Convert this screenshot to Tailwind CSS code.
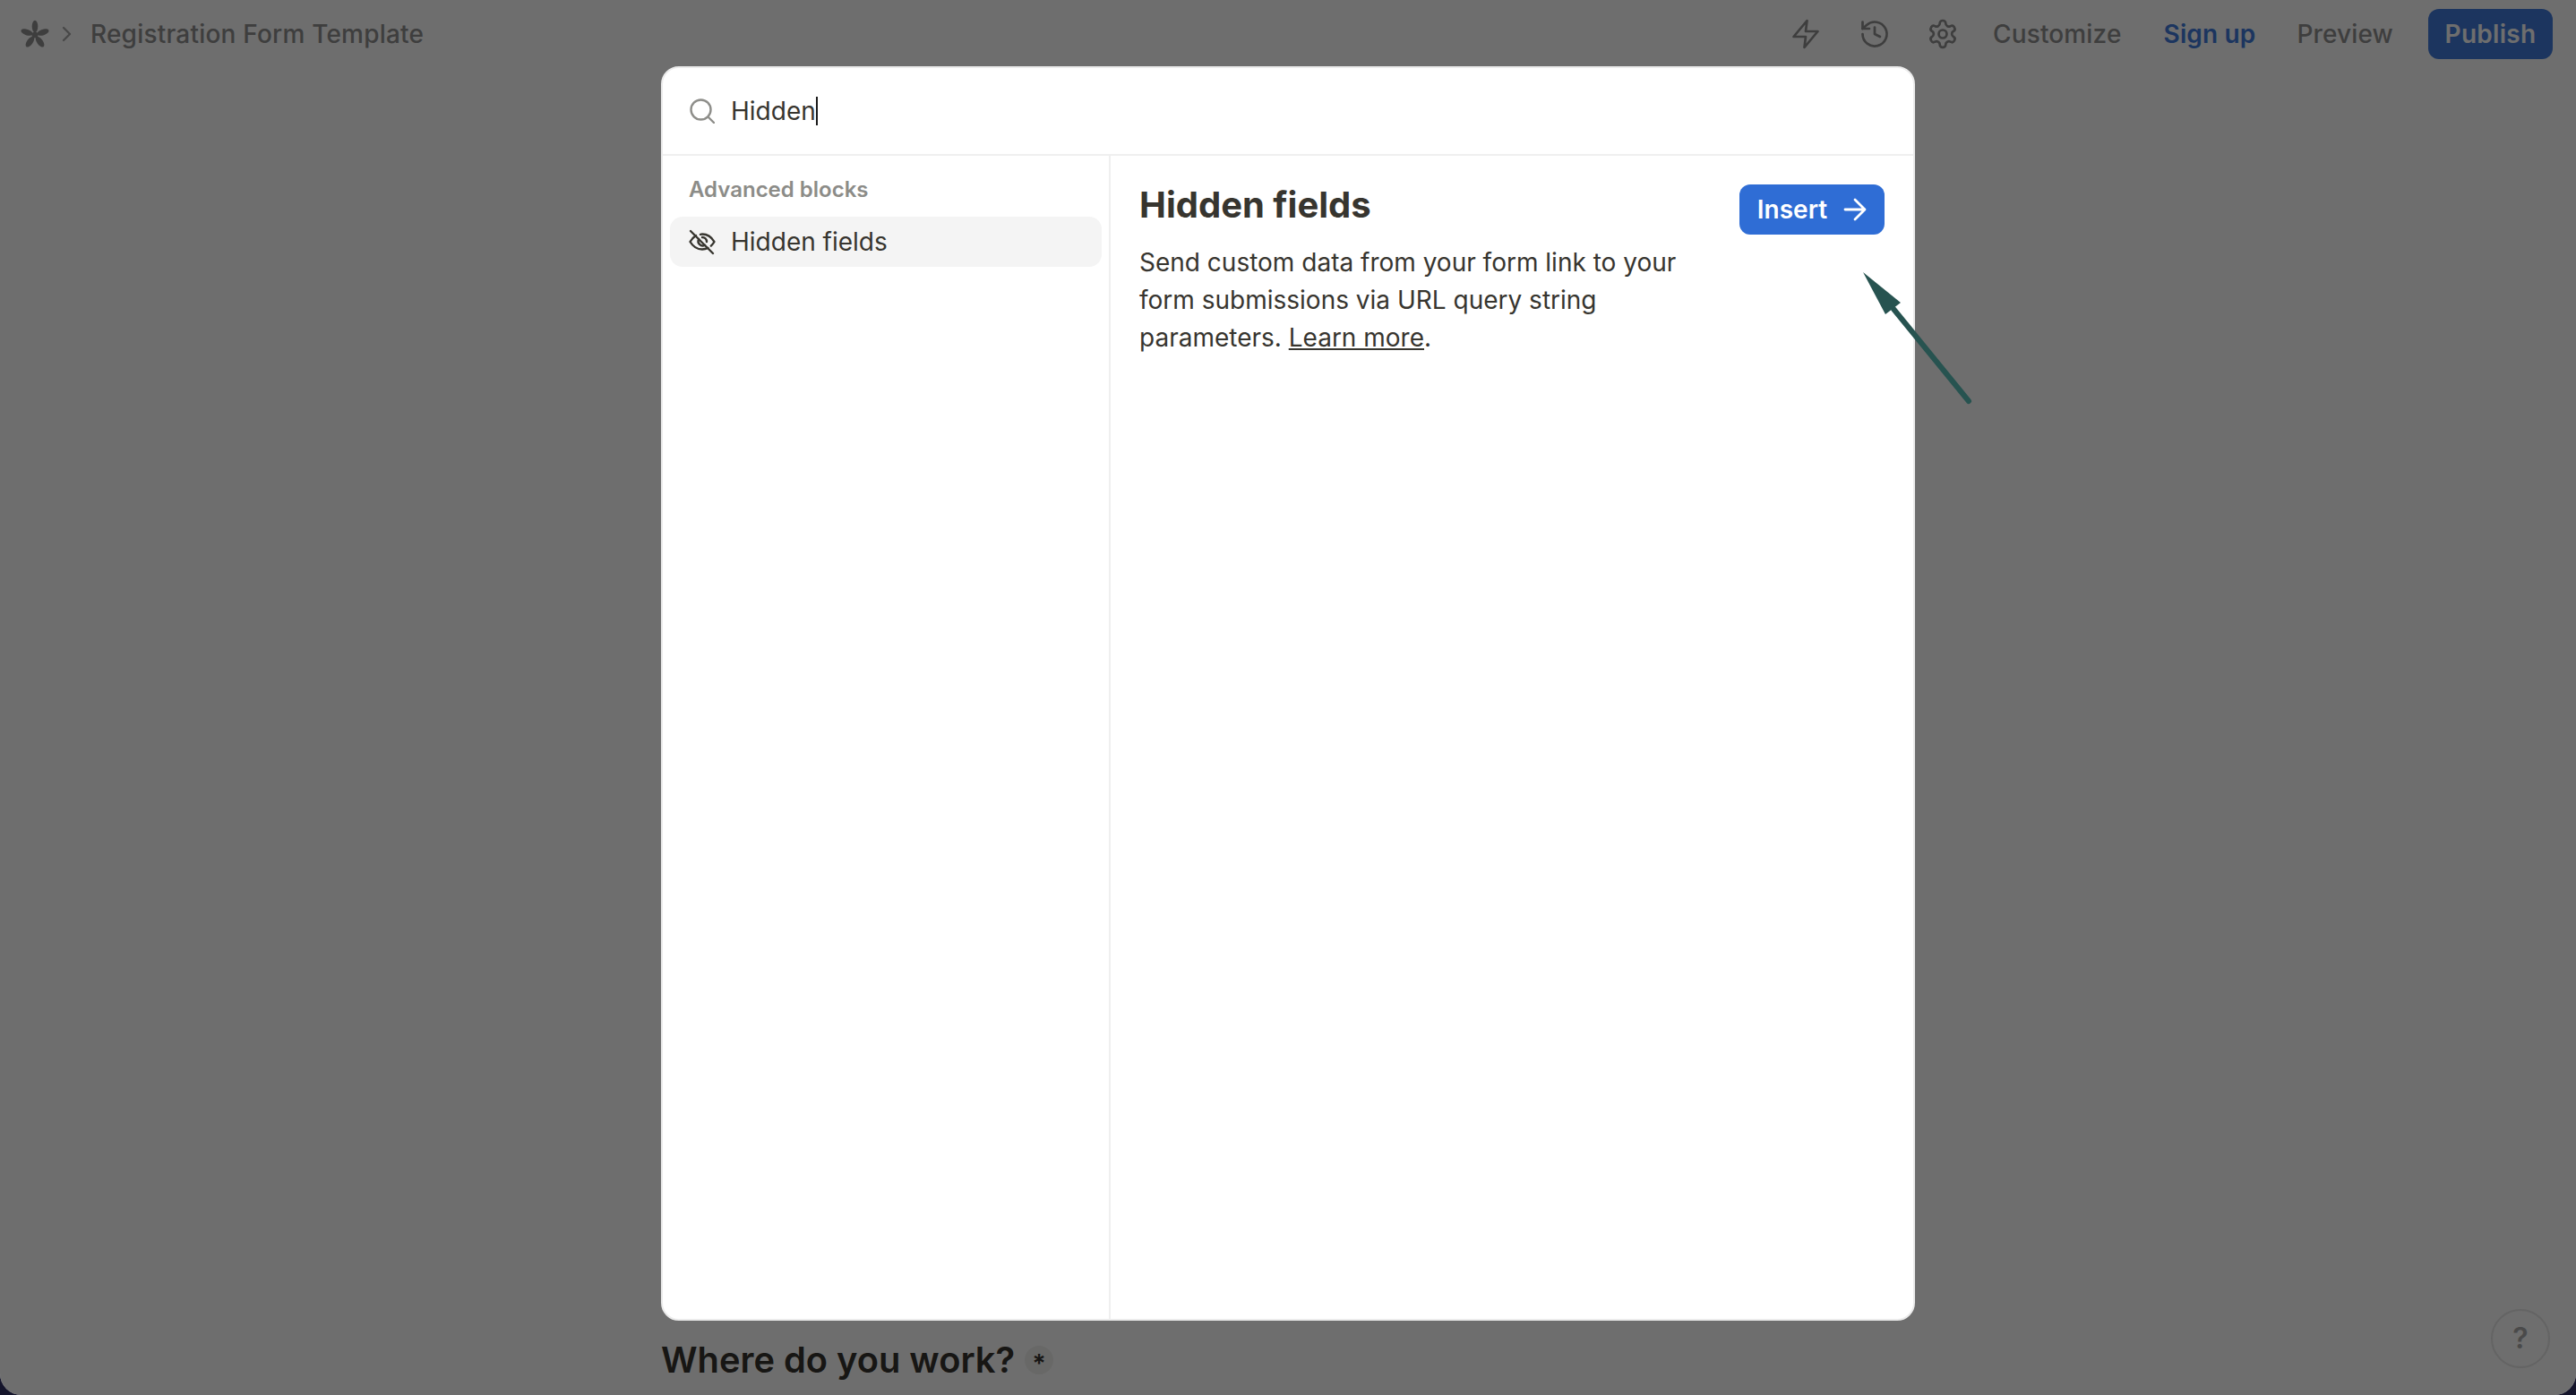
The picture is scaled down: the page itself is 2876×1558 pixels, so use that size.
<!DOCTYPE html>
<html lang="en">
<head>
<meta charset="UTF-8">
<title>Registration Form Template</title>
<script src="https://cdn.jsdelivr.net/npm/@tailwindcss/browser@4"></script>
</head>
<body class="bg-[#15152b] font-['Inter',sans-serif] overflow-hidden">
<div class="relative w-[2876px] h-[1558px] bg-white overflow-hidden rounded-b-[24px]">

  <!-- Page behind the dialog -->
  <header class="flex items-center justify-between h-[76px] pl-[21px] pr-[26px]">
    <div class="flex items-center">
      <svg class="w-[36px] h-[36px]" viewBox="0 0 36 36" fill="#8f8f8f">
        <g transform="translate(18 19)">
          <ellipse cx="0" cy="-9.500" rx="3.300" ry="6.800"/>
          <ellipse cx="0" cy="-9.500" rx="3.300" ry="6.800" transform="rotate(72)"/>
          <ellipse cx="0" cy="-9.500" rx="3.300" ry="6.800" transform="rotate(144)"/>
          <ellipse cx="0" cy="-9.500" rx="3.300" ry="6.800" transform="rotate(216)"/>
          <ellipse cx="0" cy="-9.500" rx="3.300" ry="6.800" transform="rotate(288)"/>
          <circle r="3.500"/>
        </g>
      </svg>
      <svg class="w-[16px] h-[20px] ml-[10px]" viewBox="0 0 16 20" fill="none" stroke="#a8a8a8" stroke-width="2.400" stroke-linecap="round" stroke-linejoin="round"><path d="M4 3l7 7-7 7"/></svg>
      <span class="ml-[18px] text-[28px] tracking-[0.2px] font-medium text-[#8f8f8f]">Registration Form Template</span>
    </div>
    <div class="flex items-center">
      <svg class="w-[36px] h-[36px]" viewBox="0 0 24 24" fill="none" stroke="#8f8f8f" stroke-width="1.800" stroke-linecap="round" stroke-linejoin="round"><path d="M13 2 3 14h9l-1 8 10-12h-9l1-8z"/></svg>
      <svg class="w-[36px] h-[36px] ml-[41px]" viewBox="0 0 24 24" fill="none" stroke="#8f8f8f" stroke-width="1.800" stroke-linecap="round" stroke-linejoin="round"><path d="M3 12a9 9 0 1 0 3-6.700L3 8"/><path d="M3 3v5h5"/><path d="M12 7v5l4 2"/></svg>
      <svg class="w-[36px] h-[36px] ml-[40px]" viewBox="0 0 24 24" fill="none" stroke="#8f8f8f" stroke-width="1.800" stroke-linecap="round" stroke-linejoin="round"><path d="M12.200 2h-.4a2 2 0 0 0-2 2v.2a2 2 0 0 1-1 1.700l-.4.3a2 2 0 0 1-2 0l-.2-.1a2 2 0 0 0-2.700.7l-.2.4a2 2 0 0 0 .7 2.700l.2.1a2 2 0 0 1 1 1.700v.5a2 2 0 0 1-1 1.700l-.2.1a2 2 0 0 0-.7 2.700l.2.4a2 2 0 0 0 2.700.7l.2-.1a2 2 0 0 1 2 0l.4.3a2 2 0 0 1 1 1.700v.2a2 2 0 0 0 2 2h.4a2 2 0 0 0 2-2v-.2a2 2 0 0 1 1-1.700l.4-.3a2 2 0 0 1 2 0l.2.1a2 2 0 0 0 2.700-.7l.2-.4a2 2 0 0 0-.7-2.700l-.2-.1a2 2 0 0 1-1-1.700v-.5a2 2 0 0 1 1-1.700l.2-.1a2 2 0 0 0 .7-2.700l-.2-.4a2 2 0 0 0-2.700-.7l-.2.1a2 2 0 0 1-2 0l-.4-.3a2 2 0 0 1-1-1.700V4a2 2 0 0 0-2-2z"/><circle cx="12" cy="12" r="3"/></svg>
      <span class="ml-[38px] text-[28px] tracking-[0.15px] font-medium text-[#8f8f8f]">Customize</span>
      <span class="ml-[47px] text-[28px] tracking-[0.15px] font-semibold text-[#417cdd]">Sign up</span>
      <span class="ml-[46px] text-[28px] tracking-[0.15px] font-medium text-[#8f8f8f]">Preview</span>
      <span class="ml-[39px] flex items-center justify-center w-[139px] h-[56px] rounded-[12px] bg-[#417cdd] text-[28px] tracking-[0.3px] font-semibold text-white">Publish</span>
    </div>
  </header>

  <div class="absolute left-[738px] top-[1489px] flex items-center">
    <span class="text-[39.800px] font-semibold text-[#37352f]">Where do you work?</span>
    <span class="ml-[11px] flex items-center justify-center w-[32px] h-[32px] rounded-full bg-[#f1f1ef] text-[28px] font-semibold text-[#37352f] leading-none pt-[8px]">*</span>
  </div>

  <!-- Dim overlay -->
  <div class="absolute inset-0 bg-black/57"></div>

  <!-- Help button -->
  <div class="absolute left-[2781px] top-[1462px] w-[66px] h-[66px] rounded-full border-2 border-[#646464] flex items-center justify-center text-[32px] font-semibold text-[#4a4a4a]">?</div>

  <!-- Command dialog -->
  <div class="absolute left-[738px] top-[74px] w-[1400px] h-[1401px] bg-white rounded-[20px] flex flex-col overflow-hidden border-2 border-[#ececec]">
    <div class="flex items-center h-[98px] shrink-0 border-b-2 border-[#efefef] pl-[30px]">
      <svg class="w-[28px] h-[28px]" viewBox="0 0 28 28" fill="none" stroke="#8e8e8a" stroke-width="2.400" stroke-linecap="round"><circle cx="12.500" cy="12.500" r="11"/><path d="M20.500 20.500l6.500 6.500"/></svg>
      <span class="ml-[18px] text-[28px] text-[#37352f]">Hidden</span>
      <span class="w-[2px] h-[32px] bg-[#1a1a1a]"></span>
    </div>
    <div class="flex flex-1 min-h-0">
      <aside class="w-[500px] shrink-0 border-r-2 border-[#efefef] px-[8px]">
        <p class="mt-[20px] ml-[21px] text-[24px] font-semibold text-[#8c8c88]">Advanced blocks</p>
        <div class="mt-[12px] h-[56px] rounded-[14px] bg-[#f4f4f4] flex items-center pl-[21px]">
          <svg class="w-[30px] h-[30px]" viewBox="0 0 30 30" fill="none" stroke="#37352f" stroke-width="2.400" stroke-linecap="round" stroke-linejoin="round"><path d="M2 3l25 25"/><path d="M8 8c-3 2-5 4.500-6.500 7 3 5 7.500 8.500 13.500 8.500 2.500 0 4.500-.6 6.500-1.600"/><path d="M13 6.800c.7-.2 1.400-.3 2-.3 6 0 10.500 3.500 13.500 8.500-1 1.700-2.200 3.300-3.700 4.600"/><path d="M11.200 12a5 5 0 0 0 6.800 6.800"/><path d="M15 10a5 5 0 0 1 5 5"/></svg>
          <span class="ml-[17px] text-[28px] text-[#37352f]">Hidden fields</span>
        </div>
      </aside>
      <section class="flex-1 pl-[32px] pr-[32px] pt-[31px] flex items-start justify-between">
        <div class="w-[640px]">
          <h2 class="text-[40px] leading-[48px] font-bold text-[#37352f]">Hidden fields</h2>
          <p class="mt-[19px] text-[28px] leading-[42px] text-[#37352f]">Send custom data from your form link to your form submissions via URL query string parameters. <span class="underline">Learn more</span>.</p>
        </div>
        <button class="mt-[1px] flex items-center justify-center w-[162px] h-[56px] rounded-[12px] bg-[#2f6dd5] text-[28px] font-semibold text-white">Insert
          <svg class="w-[26px] h-[26px] ml-[18px]" viewBox="0 0 26 26" fill="none" stroke="white" stroke-width="2.800" stroke-linecap="round" stroke-linejoin="round"><path d="M2 13h22M13 2l11 11-11 11"/></svg>
        </button>
      </section>
    </div>
  </div>

  <!-- Annotation arrow -->
  <svg class="absolute left-0 top-0 w-[2876px] h-[1558px] pointer-events-none" viewBox="0 0 2876 1558">
    <path d="M2198 448L2114 345" stroke="#275350" stroke-width="6" stroke-linecap="round" fill="none"/>
    <path d="M2080 304L2122 338L2105 351Z" fill="#275350"/>
  </svg>
</div>
</body>
</html>
